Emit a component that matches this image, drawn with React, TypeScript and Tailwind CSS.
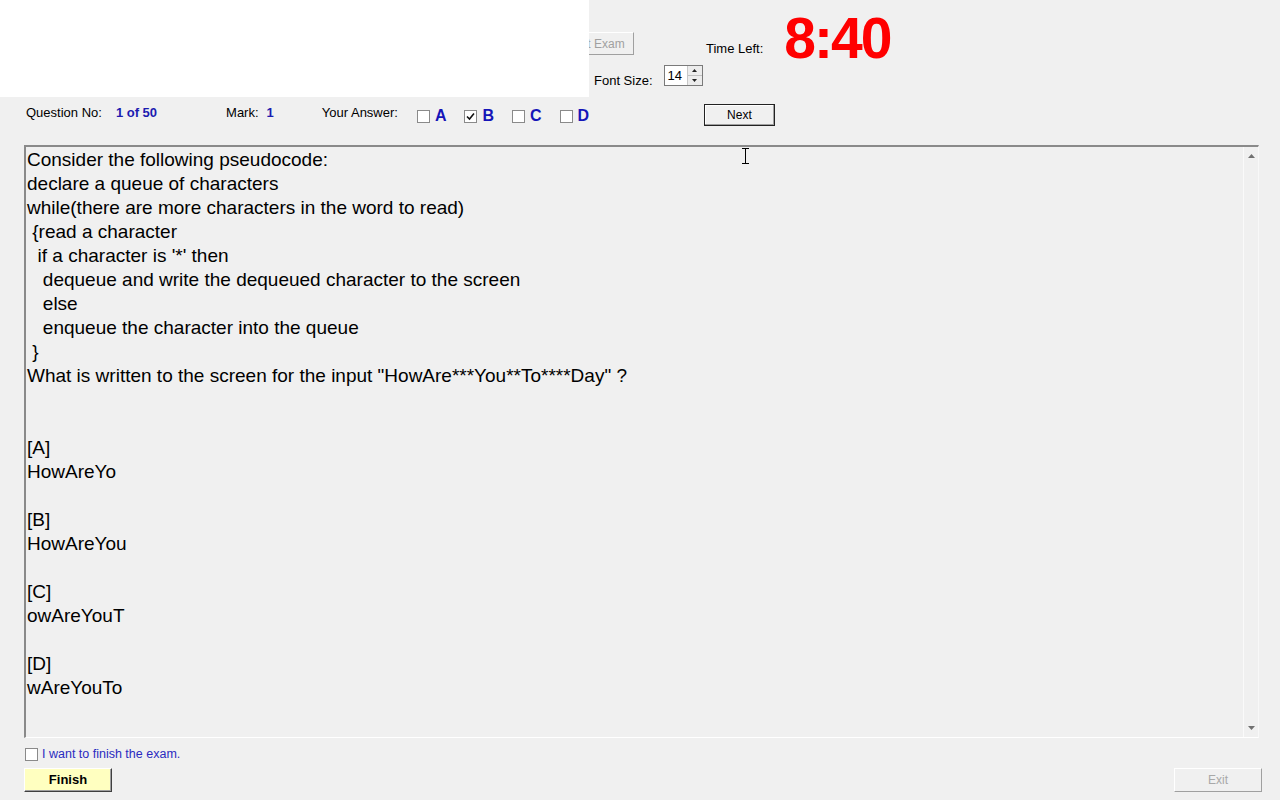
import React from "react";

const QUESTION = `Consider the following pseudocode:
declare a queue of characters
while(there are more characters in the word to read)
 {read a character
  if a character is '*' then
   dequeue and write the dequeued character to the screen
   else
   enqueue the character into the queue
 }
What is written to the screen for the input "HowAre***You**To****Day" ?


[A]
HowAreYo

[B]
HowAreYou

[C]
owAreYouT

[D]
wAreYouTo
`;

const Check = ({ checked = false }: { checked?: boolean }) => (
  <span className="inline-flex items-center justify-center w-[13px] h-[13px] border border-[#8a8a8a] bg-white shrink-0">
    {checked && (
      <svg width="9" height="9" viewBox="0 0 9 9">
        <path d="M1 4.5 L3.5 7 L8 1.5" stroke="#111" strokeWidth="1.6" fill="none" />
      </svg>
    )}
  </span>
);

const AnswerBox = ({ letter, checked }: { letter: string; checked?: boolean }) => (
  <div className="flex items-center gap-[5px]">
    <Check checked={checked} />
    <span className="text-[16px] font-bold text-[#1515b8] leading-none">{letter}</span>
  </div>
);

export default function App() {
  return (
    <div
      className="relative w-[1280px] h-[800px] bg-[#f0f0f0] text-black overflow-hidden"
      style={{ fontFamily: '"Liberation Sans", Arial, sans-serif' }}
    >
      {/* top strip */}
      <div className="flex h-[97px]">
        <div className="w-[589px] h-[97px] bg-white shrink-0" />
        <div className="flex flex-col">
          <div className="flex items-start h-[62px]">
            <div className="mt-[32px] w-[46px] h-[23px] overflow-hidden shrink-0">
              <div className="ml-[-33px] w-[78px] h-[23px] border border-t-white border-l-white border-r-[#a0a0a0] border-b-[#a0a0a0] bg-[#f0f0f0] flex items-center justify-center text-[12px] text-[#a0a0a0]">
                Start Exam
              </div>
            </div>
            <div className="ml-[71px] mt-[41px] text-[13px] leading-[16px]">Time Left:</div>
            <div className="ml-[21px] mt-[10px] text-[57px] leading-none font-bold text-[#ff0000] tracking-[-2px]">
              8:40
            </div>
          </div>
          <div className="flex items-start">
            <div className="ml-[5px] mt-[11px] text-[13px] leading-[16px]">Font Size:</div>
            <div className="ml-[11px] mt-[3px] w-[39px] h-[21px] border border-[#7a7a7a] bg-white flex">
              <span className="flex-1 text-[13px] leading-[19px] pl-[3px]">14</span>
              <div className="w-[15px] flex flex-col border-l border-[#c8c8c8]">
                <div className="flex-1 flex items-center justify-center bg-[#ececec] border-b border-[#c0c0c0]">
                  <svg width="5" height="3" viewBox="0 0 5 3"><path d="M0 3 L2.5 0 L5 3Z" fill="#222" /></svg>
                </div>
                <div className="flex-1 flex items-center justify-center bg-[#ececec]">
                  <svg width="5" height="3" viewBox="0 0 5 3"><path d="M0 0 L2.5 3 L5 0Z" fill="#222" /></svg>
                </div>
              </div>
            </div>
          </div>
        </div>
      </div>

      {/* question row */}
      <div className="flex items-center h-[30px] mt-[1px] text-[13px]">
        <span className="ml-[26px]">Question No:</span>
        <span className="ml-[14px] font-bold text-[#1c1cb0]">1 of 50</span>
        <span className="ml-[69px]">Mark:</span>
        <span className="ml-[8px] font-bold text-[#1c1cb0]">1</span>
        <span className="ml-[48px]">Your Answer:</span>
        <div className="ml-[19px] w-[287px] flex gap-[18px] mt-[6px]">
          <AnswerBox letter="A" />
          <AnswerBox letter="B" checked />
          <AnswerBox letter="C" />
          <AnswerBox letter="D" />
        </div>
        <button className="mt-[4px] w-[71px] h-[22px] border border-[#222] bg-[#f0f0f0] shadow-[inset_-1px_-1px_0_#a0a0a0,inset_1px_1px_0_#ffffff] text-[12px]">
          Next
        </button>
      </div>

      {/* question text */}
      <div className="ml-[24px] mt-[17px] w-[1235px] h-[593px] border-t-2 border-l-2 border-t-[#8a8a8a] border-l-[#8a8a8a] border-b border-b-white border-r border-r-[#f8f8f8] flex">
        <pre
          className="flex-1 pl-[1px] pt-[1px] text-[19px] leading-[24px] whitespace-pre"
          style={{ fontFamily: '"Liberation Sans", Arial, sans-serif' }}
        >
          {QUESTION}
        </pre>
        <div className="w-[15px] border-l border-[#fafafa] flex flex-col justify-between items-center py-[7px] bg-[#f0f0f0]">
          <svg width="7" height="4" viewBox="0 0 7 4"><path d="M0 4 L3.5 0 L7 4Z" fill="#707070" /></svg>
          <svg width="7" height="4" viewBox="0 0 7 4"><path d="M0 0 L3.5 4 L7 0Z" fill="#707070" /></svg>
        </div>
      </div>

      {/* finish checkbox */}
      <div className="flex items-center ml-[25px] mt-[7px] gap-[4px] text-[12.5px] text-[#2b2bc0]">
        <Check />
        <span>I want to finish the exam.</span>
      </div>

      {/* bottom buttons */}
      <div className="flex justify-between items-center ml-[24px] mr-[18px] mt-[4px]">
        <button className="w-[88px] h-[24px] bg-[#ffffc0] border border-t-white border-l-white border-r-[#404040] border-b-[#404040] shadow-[inset_-1px_-1px_0_#a0a0a0] text-[13px] font-bold">
          Finish
        </button>
        <button className="w-[88px] h-[24px] bg-[#f0f0f0] border border-t-white border-l-white border-r-[#a0a0a0] border-b-[#a0a0a0] text-[12px] text-[#a8a8a8]">
          Exit
        </button>
      </div>

      {/* mouse cursor (I-beam) */}
      <svg className="absolute left-[741px] top-[148px]" width="9" height="16" viewBox="0 0 9 16">
        <path d="M1 0.5 H8 M4.5 0.5 V15.5 M1 15.5 H8" stroke="#000" strokeWidth="1" fill="none" />
      </svg>
    </div>
  );
}
